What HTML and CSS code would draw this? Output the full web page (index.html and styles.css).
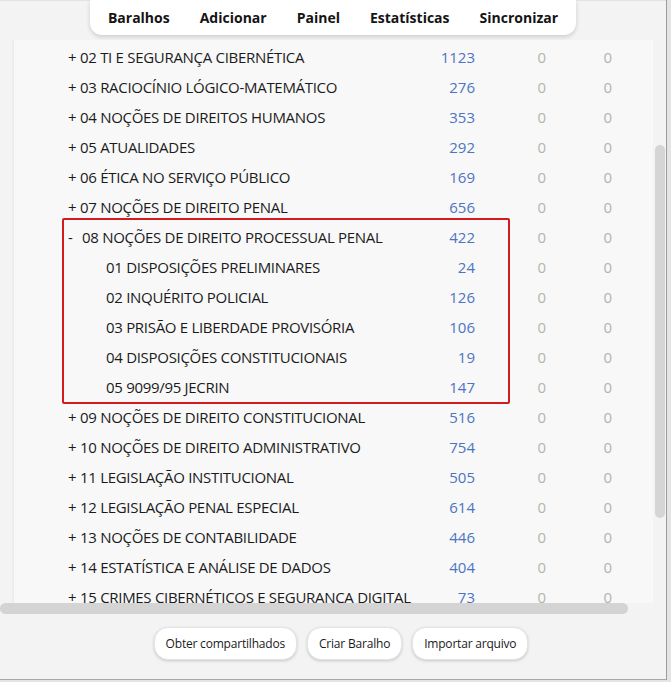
FILE: index.html
```html
<!DOCTYPE html>
<html lang="pt">
<head>
<meta charset="utf-8">
<title>Baralhos</title>
<link rel="stylesheet" href="styles.css">
</head>
<body>
<div class="window">
  <header class="top">
    <nav class="toolbar">
      <span class="tb-item">Baralhos</span>
      <span class="tb-item">Adicionar</span>
      <span class="tb-item">Painel</span>
      <span class="tb-item">Estatísticas</span>
      <span class="tb-item">Sincronizar</span>
    </nav>
  </header>
  <main class="middle">
    <div class="left">
      <div class="viewport">
        <div class="panel">
          <div class="row"><span class="name"><span class="exp">+</span>02 TI E SEGURANÇA CIBERNÉTICA</span><span class="count">1123</span><span class="zero">0</span><span class="zero">0</span></div>
          <div class="row"><span class="name"><span class="exp">+</span>03 RACIOCÍNIO LÓGICO-MATEMÁTICO</span><span class="count">276</span><span class="zero">0</span><span class="zero">0</span></div>
          <div class="row"><span class="name"><span class="exp">+</span>04 NOÇÕES DE DIREITOS HUMANOS</span><span class="count">353</span><span class="zero">0</span><span class="zero">0</span></div>
          <div class="row"><span class="name"><span class="exp">+</span>05 ATUALIDADES</span><span class="count">292</span><span class="zero">0</span><span class="zero">0</span></div>
          <div class="row"><span class="name"><span class="exp">+</span>06 ÉTICA NO SERVIÇO PÚBLICO</span><span class="count">169</span><span class="zero">0</span><span class="zero">0</span></div>
          <div class="row"><span class="name"><span class="exp">+</span>07 NOÇÕES DE DIREITO PENAL</span><span class="count">656</span><span class="zero">0</span><span class="zero">0</span></div>
          <div class="group">
            <div class="row"><span class="name"><span class="exp minus">-</span>08 NOÇÕES DE DIREITO PROCESSUAL PENAL</span><span class="count">422</span><span class="zero">0</span><span class="zero">0</span></div>
            <div class="row child"><span class="name"><span class="exp"></span>01 DISPOSIÇÕES PRELIMINARES</span><span class="count">24</span><span class="zero">0</span><span class="zero">0</span></div>
            <div class="row child"><span class="name"><span class="exp"></span>02 INQUÉRITO POLICIAL</span><span class="count">126</span><span class="zero">0</span><span class="zero">0</span></div>
            <div class="row child"><span class="name"><span class="exp"></span>03 PRISÃO E LIBERDADE PROVISÓRIA</span><span class="count">106</span><span class="zero">0</span><span class="zero">0</span></div>
            <div class="row child"><span class="name"><span class="exp"></span>04 DISPOSIÇÕES CONSTITUCIONAIS</span><span class="count">19</span><span class="zero">0</span><span class="zero">0</span></div>
            <div class="row child"><span class="name"><span class="exp"></span>05 9099/95 JECRIN</span><span class="count">147</span><span class="zero">0</span><span class="zero">0</span></div>
          </div>
          <div class="row"><span class="name"><span class="exp">+</span>09 NOÇÕES DE DIREITO CONSTITUCIONAL</span><span class="count">516</span><span class="zero">0</span><span class="zero">0</span></div>
          <div class="row"><span class="name"><span class="exp">+</span>10 NOÇÕES DE DIREITO ADMINISTRATIVO</span><span class="count">754</span><span class="zero">0</span><span class="zero">0</span></div>
          <div class="row"><span class="name"><span class="exp">+</span>11 LEGISLAÇÃO INSTITUCIONAL</span><span class="count">505</span><span class="zero">0</span><span class="zero">0</span></div>
          <div class="row"><span class="name"><span class="exp">+</span>12 LEGISLAÇÃO PENAL ESPECIAL</span><span class="count">614</span><span class="zero">0</span><span class="zero">0</span></div>
          <div class="row"><span class="name"><span class="exp">+</span>13 NOÇÕES DE CONTABILIDADE</span><span class="count">446</span><span class="zero">0</span><span class="zero">0</span></div>
          <div class="row"><span class="name"><span class="exp">+</span>14 ESTATÍSTICA E ANÁLISE DE DADOS</span><span class="count">404</span><span class="zero">0</span><span class="zero">0</span></div>
          <div class="row"><span class="name"><span class="exp">+</span>15 CRIMES CIBERNÉTICOS E SEGURANCA DIGITAL</span><span class="count">73</span><span class="zero">0</span><span class="zero">0</span></div>
        </div>
      </div>
      <div class="hscroll"></div>
    </div>
    <div class="vscroll"><div class="vthumb"></div></div>
  </main>
  <footer class="buttons">
    <button class="btn">Obter compartilhados</button>
    <button class="btn">Criar Baralho</button>
    <button class="btn">Importar arquivo</button>
  </footer>
</div>
</body>
</html>
```
FILE: styles.css
```css
* { box-sizing: border-box; }

html, body {
  margin: 0;
  padding: 0;
}

body {
  background: #e4e4e4;
  width: 671px;
  height: 682px;
  overflow: hidden;
  font-family: "Open Sans", "Noto Sans", sans-serif;
}

.window {
  width: 667px;
  height: 680px;
  background: #f3f3f3;
  border-right: 1px solid #9c9c9c;
  border-bottom: 1px solid #a8a8a8;
  display: flex;
  flex-direction: column;
}

.top {
  height: 40px;
  display: flex;
  justify-content: center;
  align-items: flex-start;
  border-top: 1px solid #e2e2e2;
}

.toolbar {
  margin-top: -1px;
  height: 35px;
  width: 486px;
  background: #ffffff;
  border-radius: 0 0 12px 12px;
  box-shadow: 0 2px 4px rgba(0, 0, 0, 0.16);
  display: flex;
  justify-content: center;
  align-items: center;
}

.tb-item {
  padding: 0 15px;
  font-size: 14px;
  font-weight: 700;
  color: #141414;
  font-stretch: 96%;
}

.middle {
  height: 574px;
  display: flex;
}

.left {
  width: 655px;
  display: flex;
  flex-direction: column;
}

.viewport {
  height: 563px;
  overflow: hidden;
}

.panel {
  margin-left: 14px;
  width: 639px;
  height: 600px;
  padding-top: 2px;
  background: #f8f8f8;
  box-shadow: -1px 0 2px rgba(0, 0, 0, 0.05);
  font-family: "Open Sans", "Noto Sans", sans-serif;
  font-size: 15px;
  font-weight: 380;
}

.row {
  height: 30px;
  line-height: 30px;
  display: grid;
  grid-template-columns: 357px 50px 71px 66px;
  padding-left: 54px;
  white-space: nowrap;
}

.name {
  color: #1b1b1b;
  letter-spacing: -0.3px;
}

.exp {
  display: inline-block;
  width: 12px;
  letter-spacing: 0;
}

.exp.minus {
  width: 14px;
}

.child .name {
  padding-left: 26px;
}

.count {
  text-align: right;
  color: #4c74c2;
  font-stretch: 94%;
}

.zero {
  text-align: right;
  color: #b3b3b3;
  font-stretch: 94%;
}

.group {
  position: relative;
}

.group::after {
  content: "";
  position: absolute;
  top: -4px;
  bottom: -2px;
  left: 48px;
  width: 444px;
  border: 2px solid #d21a1f;
  border-radius: 2px;
  pointer-events: none;
}

.hscroll {
  height: 11px;
  width: 628px;
  background: #d4d4d4;
  border-radius: 6px;
}

.vscroll {
  width: 11px;
  padding-top: 105px;
}

.vthumb {
  width: 10px;
  height: 373px;
  background: #d5d5d5;
  border-radius: 5px;
}

.buttons {
  flex: 1;
  display: flex;
  justify-content: center;
  align-items: flex-start;
  gap: 10px;
  padding-top: 13px;
  padding-left: 16px;
}

.btn {
  height: 33px;
  padding: 0 11px;
  background: #ffffff;
  border: 1px solid #e4e4e4;
  border-radius: 14px;
  box-shadow: 0 1px 3px rgba(0, 0, 0, 0.18);
  font-family: "Open Sans", "Noto Sans", sans-serif;
  font-size: 12px;
  letter-spacing: -0.2px;
  color: #1a1a1a;
}
```
